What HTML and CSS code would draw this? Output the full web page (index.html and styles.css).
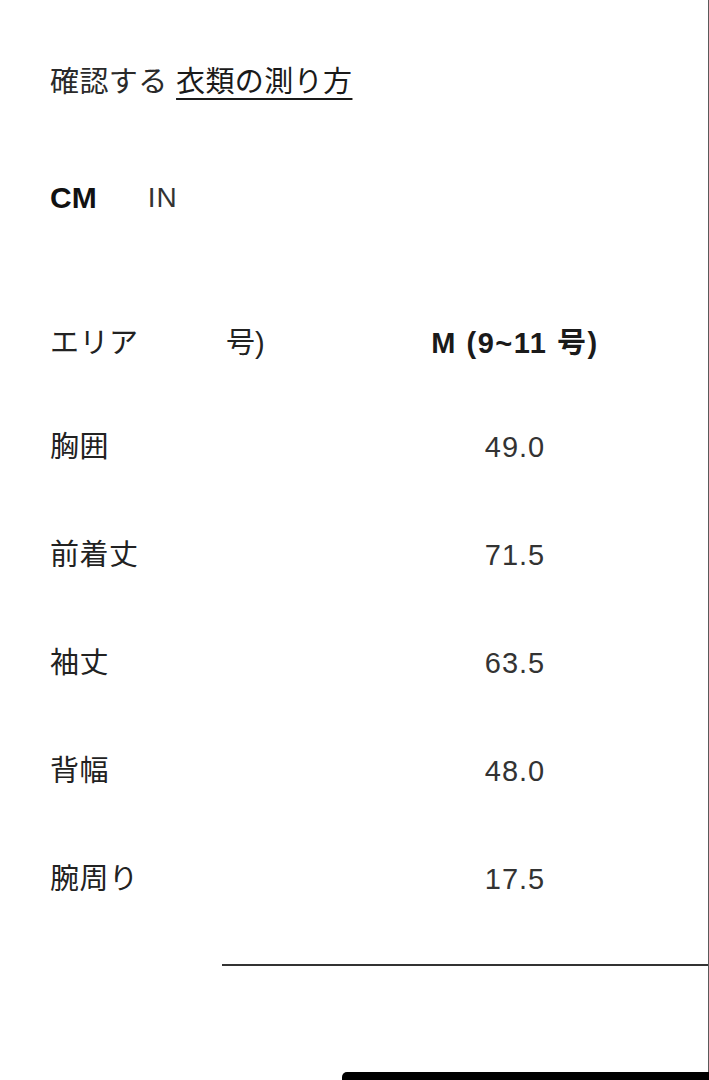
FILE: index.html
```html
<!DOCTYPE html>
<html lang="ja">
<head>
<meta charset="utf-8">
<title>サイズガイド</title>
<link rel="stylesheet" href="styles.css">
</head>
<body>
<div class="panel">
  <p class="guide">確認する <a class="guide-link" href="#">衣類の測り方</a></p>
  <div class="units">
    <span class="unit unit-active">CM</span>
    <span class="unit">IN</span>
  </div>
  <div class="size-table">
    <div class="row head">
      <div class="cell label">エリア</div>
      <div class="cell clip">号)</div>
      <div class="cell val bold">M (9~11 号)</div>
    </div>
    <div class="row">
      <div class="cell label">胸囲</div>
      <div class="cell clip"></div>
      <div class="cell val">49.0</div>
    </div>
    <div class="row">
      <div class="cell label">前着丈</div>
      <div class="cell clip"></div>
      <div class="cell val">71.5</div>
    </div>
    <div class="row">
      <div class="cell label">袖丈</div>
      <div class="cell clip"></div>
      <div class="cell val">63.5</div>
    </div>
    <div class="row">
      <div class="cell label">背幅</div>
      <div class="cell clip"></div>
      <div class="cell val">48.0</div>
    </div>
    <div class="row">
      <div class="cell label">腕周り</div>
      <div class="cell clip"></div>
      <div class="cell val">17.5</div>
    </div>
  </div>
  <div class="table-rule"></div>
</div>
<div class="bottom-bar"></div>
</body>
</html>
```

FILE: styles.css
```css
html, body {
  margin: 0;
  padding: 0;
  background: #fff;
}

body {
  font-family: "Liberation Sans", "Noto Sans CJK JP", sans-serif;
  color: #222;
  overflow: hidden;
}

.panel {
  box-sizing: border-box;
  width: 709px;
  min-height: 1080px;
  padding: 62px 0 0 50px;
  border-right: 1px solid #5a5a5a;
}

.guide {
  margin: 0;
  font-size: 29px;
  line-height: 40px;
  letter-spacing: 0.4px;
  color: #2a2a2a;
}

.guide-link {
  color: #1a1a1a;
  text-decoration: underline;
  text-decoration-thickness: 2px;
  text-underline-offset: 6px;
}

.units {
  display: flex;
  align-items: center;
  gap: 51px;
  height: 40px;
  margin-top: 76px;
  line-height: 40px;
}

.unit {
  color: #333;
  font-size: 28px;
  letter-spacing: 1px;
}

.unit-active {
  font-weight: 700;
  font-size: 30px;
  letter-spacing: 0;
  color: #111;
}

.size-table {
  margin-top: 75px;
}

.row {
  display: grid;
  grid-template-columns: 172px 178px 230px;
  height: 108px;
  align-items: center;
  font-size: 29px;
  line-height: 40px;
}

.row.head {
  height: 100px;
}

.cell.label {
  letter-spacing: 0.5px;
}

.cell.clip {
  padding-left: 4px;
}

.cell.val {
  text-align: center;
  color: #333;
  letter-spacing: 1px;
}

.cell.bold {
  font-weight: 700;
  color: #1a1a1a;
  letter-spacing: 1.5px;
}

.table-rule {
  margin: 31px 0 0 172px;
  border-top: 2px solid #333;
}

.bottom-bar {
  position: fixed;
  left: 342px;
  right: 0;
  top: 1072px;
  height: 40px;
  background: #000;
  border-top-left-radius: 5px;
}
```
